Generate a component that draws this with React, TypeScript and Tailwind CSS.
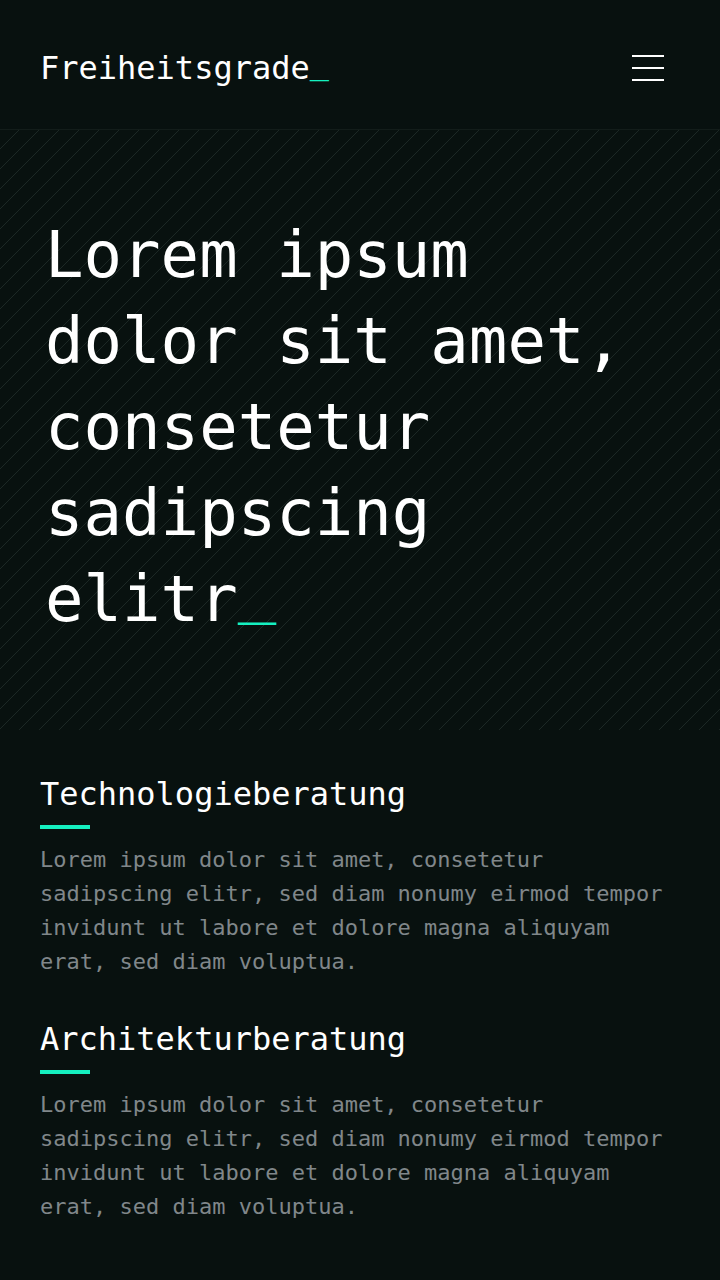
import React from "react";

const sections = [
  {
    title: "Technologieberatung",
    body: "Lorem ipsum dolor sit amet, consetetur sadipscing elitr, sed diam nonumy eirmod tempor invidunt ut labore et dolore magna aliquyam erat, sed diam voluptua.",
  },
  {
    title: "Architekturberatung",
    body: "Lorem ipsum dolor sit amet, consetetur sadipscing elitr, sed diam nonumy eirmod tempor invidunt ut labore et dolore magna aliquyam erat, sed diam voluptua.",
  },
];

export default function App() {
  return (
    <div className="min-h-screen bg-[#08110f] text-white font-['DejaVu_Sans_Mono','Liberation_Mono',monospace]">
      <header className="h-[130px] border-b border-[#131d1a] px-10 pt-[6px] flex items-center justify-between">
        <div className="text-[32px] leading-[40px] text-white">
          Freiheitsgrade<span className="text-[#15f0c0] leading-[0] align-[0.17em]">_</span>
        </div>
        <button className="p-4 flex flex-col gap-[10px]" aria-label="Menü">
          <span className="block w-[32px] h-[2px] bg-white" />
          <span className="block w-[32px] h-[2px] bg-white" />
          <span className="block w-[32px] h-[2px] bg-white" />
        </button>
      </header>

      <section className="h-[600px] pl-[45px] pr-10 pt-[82px] bg-[image:repeating-linear-gradient(135deg,transparent_0px,transparent_12.9px,#1c2825_12.9px,#1c2825_14.14px)]">
        <h1 className="text-[64px] leading-[86px] text-white">
          Lorem ipsum dolor sit amet, consetetur sadipscing elitr<span className="text-[#15f0c0] leading-[0] align-[0.17em]">_</span>
        </h1>
      </section>

      <main className="px-10 pt-[44px] pb-14 flex flex-col gap-10">
        {sections.map((s) => (
          <article key={s.title} className="flex flex-col">
            <h2 className="text-[32px] leading-[40px] text-white">{s.title}</h2>
            <div className="mt-[11px] w-[50px] h-[4px] bg-[#15f0c0]" />
            <p className="mt-[14px] text-[22px] leading-[34px] text-[#80878a]">{s.body}</p>
          </article>
        ))}
      </main>
    </div>
  );
}
